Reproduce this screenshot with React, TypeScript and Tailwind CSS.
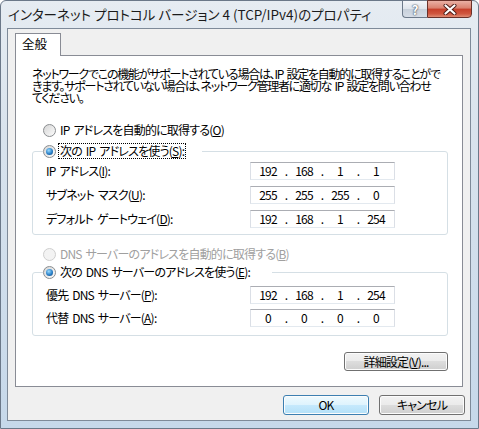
import { Fragment, type ReactNode } from "react";
import clsx from "clsx";

// Vista-style "Internet Protocol Version 4 properties" dialog, Japanese UI.

function Radio({ checked, disabled }: { checked?: boolean; disabled?: boolean }) {
  return (
    <span
      className={clsx(
        "inline-flex h-[13px] w-[13px] shrink-0 items-center justify-center rounded-full border",
        disabled
          ? "border-[#cfcfcf] bg-[#f3f3f3]"
          : "border-[#8a8d90] bg-linear-to-br from-[#d6d6d6] to-[#fcfcfc]"
      )}
    >
      {checked && (
        <span className="h-[7px] w-[7px] rounded-full bg-[radial-gradient(circle_at_40%_35%,#9bdcff,#2a80c8_55%,#0c3f73)]" />
      )}
    </span>
  );
}

// label with underlined access key, e.g. k="O" -> "(O)"
function Key({ k }: { k: string }) {
  return (
    <>
      (<span className="underline underline-offset-[1px]">{k}</span>)
    </>
  );
}

function IpField({ parts }: { parts: string[] }) {
  return (
    <div className="flex h-[18px] w-[145px] items-center border border-x-[#dbdfe6] border-t-[#abadb3] border-b-[#e3e9ef] bg-white pl-[3px] leading-none">
      {parts.map((p, i) => (
        <Fragment key={i}>
          {i > 0 && <span className="w-[8px] text-center">.</span>}
          <span className="w-[28px] text-center">{p}</span>
        </Fragment>
      ))}
    </div>
  );
}

function Row({ label, parts }: { label: ReactNode; parts: string[] }) {
  return (
    <div className="flex h-[18px] items-center pl-[3px]">
      <span className="w-[204px] whitespace-nowrap">{label}</span>
      <IpField parts={parts} />
    </div>
  );
}

function Button({ children, primary, className }: { children: ReactNode; primary?: boolean; className?: string }) {
  return (
    <button
      type="button"
      className={clsx(
        "flex items-center justify-center rounded-[3px] border shadow-[inset_0_0_0_1px_#fcfcfc]",
        primary
          ? "border-[#3c7fb1] bg-[linear-gradient(#effafe,#def3fd_50%,#c6e9fc_50%,#b3e0f8)]"
          : "border-[#707070] bg-[linear-gradient(#f2f2f2,#ebebeb_50%,#dddddd_50%,#cfcfcf)]",
        className
      )}
    >
      {children}
    </button>
  );
}

export default function App() {
  return (
    <div className="flex h-[429px] w-[479px] flex-col rounded-t-[6px] border border-[#6b7889] bg-[linear-gradient(#e6ecf2,#d9e3ed_30%,#c6d8ea)] pb-[7px] pl-[6px] pr-[7px] font-['Noto_Sans_CJK_JP',sans-serif] text-[12px] tracking-[-0.8px] text-black [font-feature-settings:'palt'] [word-spacing:2px]">
      {/* title bar */}
      <div className="flex h-[27px] shrink-0">
        <div className="flex h-[26px] flex-1 items-center pl-[1px] text-[13.5px] tracking-normal whitespace-nowrap text-[#1b1b1b] [word-spacing:0px]">
          インターネット プロトコル バージョン 4 (TCP/IPv4)のプロパティ
        </div>
        <div className="-mr-[1px] -mt-px flex h-[18px] self-start">
          <div className="flex w-[25px] items-center justify-center rounded-bl-[4px] border border-r-0 border-[#6d7a8a] bg-[linear-gradient(#f4f6f9,#dfe5ec_50%,#c7d0da_50%,#d6dde6)] text-[13px] leading-none font-bold tracking-normal text-white [text-shadow:0_0_1px_#3b4654,0_0_2px_#3b4654]">
            ?
          </div>
          <div className="flex w-[45px] items-center justify-center rounded-br-[4px] border border-[#6a3129] bg-[linear-gradient(#eab0a4,#d9806e_45%,#c63f2a_50%,#d0573f_80%,#e08c74)]">
            <svg width="14" height="11" viewBox="0 0 14 11">
              <path d="M2.5 1.5 L11.5 9.5 M11.5 1.5 L2.5 9.5" stroke="#4b1a14" strokeWidth="4" strokeLinecap="round" />
              <path d="M2.5 1.5 L11.5 9.5 M11.5 1.5 L2.5 9.5" stroke="#ffffff" strokeWidth="2.2" strokeLinecap="round" />
            </svg>
          </div>
        </div>
      </div>

      {/* client area */}
      <div className="flex flex-1 flex-col border border-[#7e8a99] bg-[#f0f0f0] pl-[7px] pr-[7px] pt-[4px]">
        <div className="flex">
          <div className="relative z-10 -mb-px flex h-[23px] w-[46px] items-start border border-b-0 border-[#898c95] bg-white pl-[6px] pt-[3px] text-[12.5px] leading-[14px] tracking-normal">
            全般
          </div>
        </div>
        <div className="flex h-[332px] flex-col border border-[#898c95] bg-white pl-[16px] pr-[14px]">
          <p className="mt-[12px] whitespace-nowrap leading-[12px] tracking-[-1.25px]">
            ネットワークでこの機能がサポートされている場合は、IP 設定を自動的に取得することがで
            <br />
            きます。サポートされていない場合は、ネットワーク管理者に適切な IP 設定を問い合わせ
            <br />
            てください。
          </p>

          <div className="mt-[19px] flex h-[14px] items-center gap-[4px] pl-[11px] leading-none">
            <Radio />
            <span>
              IP アドレスを自動的に取得する<Key k="O" />
            </span>
          </div>

          <fieldset className="mt-[7px] rounded-[3px] border border-[#d5dfe5] pb-[6px] pl-[10px] pr-[51px] pt-[4px]">
            <legend className="pr-[16px]">
              <span className="flex h-[14px] items-center gap-[2px] leading-none">
                <Radio checked />
                <span className="border border-dotted border-black px-[1px] py-[1px]">
                  次の IP アドレスを使う<Key k="S" />:
                </span>
              </span>
            </legend>
            <div className="flex flex-col gap-[6px]">
              <Row label={<>IP アドレス<Key k="I" />:</>} parts={["192", "168", "1", "1"]} />
              <Row label={<>サブネット マスク<Key k="U" />:</>} parts={["255", "255", "255", "0"]} />
              <Row label={<>デフォルト ゲートウェイ<Key k="D" />:</>} parts={["192", "168", "1", "254"]} />
            </div>
          </fieldset>

          <div className="mt-[12px] flex h-[14px] items-center gap-[4px] pl-[11px] leading-none text-[#a0a0a0]">
            <Radio disabled />
            <span>
              DNS サーバーのアドレスを自動的に取得する<Key k="B" />
            </span>
          </div>

          <fieldset className="mt-[4px] rounded-[3px] border border-[#d5dfe5] pb-[8px] pl-[10px] pr-[51px] pt-[7px]">
            <legend className="pr-[22px]">
              <span className="flex h-[14px] items-center gap-[4px] leading-none">
                <Radio checked />
                <span>
                  次の DNS サーバーのアドレスを使う<Key k="E" />:
                </span>
              </span>
            </legend>
            <div className="flex flex-col gap-[5px]">
              <Row label={<>優先 DNS サーバー<Key k="P" />:</>} parts={["192", "168", "1", "254"]} />
              <Row label={<>代替 DNS サーバー<Key k="A" />:</>} parts={["0", "0", "0", "0"]} />
            </div>
          </fieldset>

          <div className="mt-[16px] flex justify-end">
            <Button className="h-[19px] w-[104px] leading-none">
              詳細設定<Key k="V" />...
            </Button>
          </div>
        </div>

        <div className="-mr-[2px] mt-[8px] flex justify-end gap-[10px]">
          <Button primary className="h-[20px] w-[86px] leading-none">
            OK
          </Button>
          <Button className="h-[20px] w-[86px] leading-none">キャンセル</Button>
        </div>
      </div>
    </div>
  );
}
